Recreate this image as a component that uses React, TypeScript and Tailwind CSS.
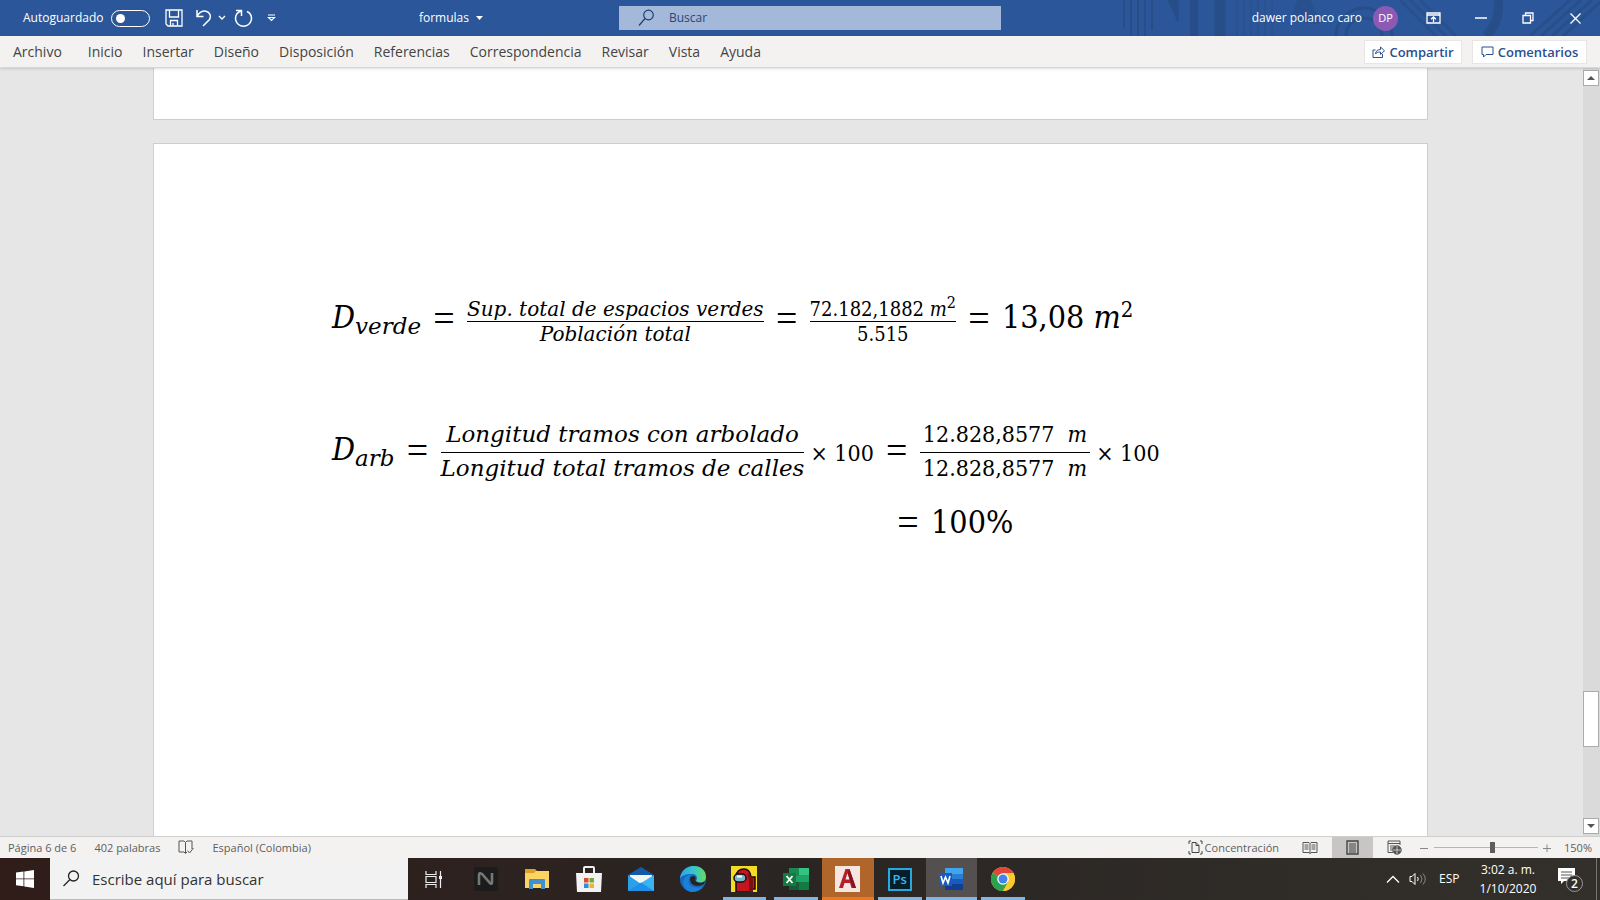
import React from "react";

const MENU = ["Inicio", "Insertar", "Diseño", "Disposición", "Referencias", "Correspondencia", "Revisar", "Vista", "Ayuda"];

function TitlePattern() {
  return (
    <svg className="pointer-events-none absolute right-0 top-0 h-9 w-[500px]" viewBox="0 0 500 36" fill="none" aria-hidden="true">
      <g stroke="#26497f" strokeWidth="3" opacity="0.6">
        <path d="M24 0v28M31 0v36M38 0v36M45 0v36M52 0v30" strokeWidth="2" />
        <path d="M68 0l10 22V0z" fill="#26497f" strokeWidth="1" />
        <path d="M94 0v36" strokeWidth="8" />
        <path d="M120 0v36" strokeWidth="11" />
        <path d="M137 0v36M144 0v36M151 0v36M158 0v36M165 0v36M172 0v36" strokeWidth="2" opacity="0.6" />
        <path d="M190 20L198 0h12l10 24z" fill="#26497f" strokeWidth="1" opacity="0.7" />
        <path d="M236 36a28 28 0 0 1 56 0M246 36a18 18 0 0 1 36 0" />
        <path d="M300 0l36 36M310 0l36 36M320 0l36 36" opacity="0.7" />
        <path d="M398 0a40 40 0 0 1-12 36" strokeWidth="9" />
        <path d="M430 36L470 0M441 36L481 0M452 36L492 0M463 36L500 2" />
      </g>
    </svg>
  );
}

function TitleBar() {
  return (
    <header className="relative h-9 bg-[#2b579a] text-white">
      <TitlePattern />
      <div className="relative grid h-full grid-cols-[619fr_382fr_599fr] items-center text-[12px] leading-5">
        <div className="flex items-center">
          <label className="flex items-center pl-[23px]">
            Autoguardado
            <input type="checkbox" className="peer sr-only" />
            <span className="ml-2 flex h-[17px] w-[39px] items-center rounded-full border border-white pl-1">
              <span className="size-[9px] rounded-full bg-white" />
            </span>
          </label>
          <button aria-label="Guardar" className="ml-[15px]">
            <svg width="18" height="18" viewBox="0 0 18 18" fill="none" stroke="white" strokeWidth="1.3"><path d="M1 1h16v16H3l-2-2zM4.5 1v7h9V1M5.500 17v-5.500h7V17M8 14v3" /></svg>
          </button>
          <button aria-label="Deshacer" className="ml-3">
            <svg width="17" height="18" viewBox="0 0 17 18" fill="none" stroke="white" strokeWidth="1.5"><path d="M2 1v6.500h6.500M2 7.500C4 3 8 1.500 11 2.300c4 1 5.500 5 3.500 8.200L8 17" /></svg>
          </button>
          <button aria-label="Opciones de deshacer" className="ml-[6px]">
            <svg width="8" height="6" viewBox="0 0 8 6" fill="none" stroke="white" strokeWidth="1.300"><path d="M1 1l3 3 3-3" /></svg>
          </button>
          <button aria-label="Repetir" className="ml-2">
            <svg width="19" height="19" viewBox="0 0 19 19" fill="none" stroke="white" strokeWidth="1.500"><path d="M2 1.500h5.500V7M7.300 2C3 3.500 1 7 1.700 11a8 8 0 0 0 15.600 0c.6-3.500-1-7-4.300-8.500" /></svg>
          </button>
          <button aria-label="Personalizar" className="ml-[14px]">
            <svg width="9" height="8" viewBox="0 0 9 8" fill="none" stroke="white" strokeWidth="1.200"><path d="M1 1h7M1.500 3.500h6l-3 3z" /></svg>
          </button>
          <button className="ml-auto mr-[136px] flex items-center gap-[7px]">
            formulas
            <svg width="7" height="4" viewBox="0 0 7 4" fill="white"><path d="M0 0h7L3.500 4z" /></svg>
          </button>
        </div>
        <label className="flex h-6 items-center bg-[#a4b8d9] pl-[19px] text-[#1f3f73]">
          <svg width="17" height="18" viewBox="0 0 17 18" fill="none" stroke="currentColor" strokeWidth="1.200" aria-hidden="true"><circle cx="10.500" cy="6" r="4.800" /><path d="M7 9.500L1 16.500" /></svg>
          <input type="text" aria-label="Buscar" placeholder="Buscar" className="ml-[14px] min-w-0 flex-1 bg-transparent outline-none placeholder:text-[#2a4678]" />
        </label>
        <div className="flex items-center justify-end">
          <span>dawer polanco caro</span>
          <span className="ml-[11px] flex size-[25px] items-center justify-center rounded-full bg-[#8c5ab5] text-[11px]">DP</span>
          <button aria-label="Opciones de la cinta" className="ml-[28px]">
            <svg width="15" height="12" viewBox="0 0 15 12" fill="none" stroke="white" strokeWidth="1.300"><path d="M1 1h13v10H1zM1 3h13M7.500 10V5M5 7.300L7.500 5 10 7.300" /></svg>
          </button>
          <button aria-label="Minimizar" className="ml-[34px]">
            <svg width="12" height="12" viewBox="0 0 12 12" stroke="white" strokeWidth="1.500"><path d="M0 6h12" /></svg>
          </button>
          <button aria-label="Restaurar" className="ml-[35px]">
            <svg width="12" height="12" viewBox="0 0 12 12" fill="none" stroke="white" strokeWidth="1.300"><path d="M1 3.500h7.500V11H1zM3.500 3.500V1H11v7.500H8.500" /></svg>
          </button>
          <button aria-label="Cerrar" className="ml-[36px] mr-[19px]">
            <svg width="11" height="11" viewBox="0 0 11 11" stroke="white" strokeWidth="1.300"><path d="M.5.5l10 10M10.500.5l-10 10" /></svg>
          </button>
        </div>
      </div>
    </header>
  );
}

function Ribbon() {
  return (
    <nav className="z-10 flex h-8 items-center border-b border-[#d8d8d8] bg-[#f3f2f1] text-[14px] leading-5 text-[#444444] shadow-sm">
      <div className="flex items-center gap-5 pl-[13px]">
        <button className="mr-[6px]">Archivo</button>
        {MENU.map((m) => (
          <button key={m}>{m}</button>
        ))}
      </div>
      <div className="ml-auto flex gap-[10px] pr-[13px] font-semibold text-[#2b4f8f]">
        <button className="flex h-6 w-[98px] items-center justify-center gap-1 border border-[#e8e6e4] bg-white text-[13px]">
          <svg width="13" height="13" viewBox="0 0 13 13" fill="none" stroke="currentColor"><path d="M3.500 5H1v7.500h9.500V9M3.500 9c.3-3 2-4.500 5-4.500V2l4 3.800-4 3.700V7C6 7 4.500 7.500 3.500 9z" /></svg>
          Compartir
        </button>
        <button className="flex h-6 w-[115px] items-center justify-center gap-1 border border-[#e8e6e4] bg-white text-[13px]">
          <svg width="13" height="12" viewBox="0 0 13 12" fill="none" stroke="currentColor"><path d="M1 1h11v7.500H5L2.500 11V8.500H1z" /></svg>
          Comentarios
        </button>
      </div>
    </nav>
  );
}

function Eq() {
  return <span className="flex w-[22px] justify-center pb-[6px] font-['Liberation_Serif',serif] text-[38px] leading-8">=</span>;
}

function Symbol({ sub }: { sub: string }) {
  return (
    <span className="flex items-baseline pb-[6px] leading-8 italic">
      <span className="text-[32px]">D</span>
      <span className="relative top-[6px] font-['DejaVu_Serif',serif] text-[23px]">{sub}</span>
    </span>
  );
}

function Fraction({ top, bottom, small }: { top: React.ReactNode; bottom: React.ReactNode; small?: boolean }) {
  return (
    <span className={small ? "flex flex-col text-center text-[20px] leading-6" : "flex flex-col pb-[6px] text-center text-[23px] leading-8"}>
      <span className={small ? "whitespace-pre border-b border-black" : "whitespace-pre border-b border-black px-[3px] pb-[2px]"}>{top}</span>
      <span className={small ? "whitespace-pre" : "whitespace-pre leading-[30px]"}>{bottom}</span>
    </span>
  );
}

function Words({ children }: { children: string }) {
  return <i className="font-['DejaVu_Serif',serif]">{children}</i>;
}

function Times() {
  return <span className="text-[23px] leading-8">× 100</span>;
}

function Document() {
  return (
    <main className="flex min-h-0 flex-1 bg-[#e6e6e6]">
      <div className="flex min-w-0 flex-1 flex-col pl-[153px] pr-[155px]">
        <div className="h-[52px] shrink-0 border-x border-b border-[#cecece] bg-white" />
        <article className="mt-[23px] flex-1 whitespace-nowrap border-x border-t border-[#cecece] bg-white pl-[178px] pt-[152px] font-['DejaVu_Serif_Condensed','DejaVu_Serif',serif] text-black">
          <div className="flex h-[50px] items-center gap-3">
            <Symbol sub="verde" />
            <Eq />
            <Fraction small top={<Words>Sup. total de espacios verdes</Words>} bottom={<Words>Población total</Words>} />
            <Eq />
            <Fraction small top={<>72.182,1882 <i>m</i><sup className="text-[16px] leading-none">2</sup></>} bottom="5.515" />
            <Eq />
            <span className="pb-2 text-[32px] leading-8">13,08 <i>m</i><sup className="text-[22px] leading-none">2</sup></span>
          </div>
          <div className="mt-[74px] flex h-[66px] items-center gap-3">
            <Symbol sub="arb" />
            <Eq />
            <span className="flex items-center gap-[6px]">
              <Fraction top={<Words>Longitud tramos con arbolado</Words>} bottom={<Words>Longitud total tramos de calles</Words>} />
              <Times />
            </span>
            <Eq />
            <span className="flex items-center gap-[6px]">
              <Fraction top={<>12.828,8577  <i>m</i></>} bottom={<>12.828,8577  <i>m</i></>} />
              <Times />
            </span>
          </div>
          <div className="mt-5 flex items-center gap-3 pl-[565px]">
            <Eq />
            <span className="pb-[6px] text-[32px] leading-8">100%</span>
          </div>
        </article>
      </div>
      <div className="flex w-[17px] flex-col bg-[#dadada] pr-px pt-[2px]">
        <button aria-label="Subir" className="flex h-4 items-center justify-center border border-[#ababab] bg-white">
          <svg width="8" height="4" viewBox="0 0 8 4" fill="#555"><path d="M0 4h8L4 0z" /></svg>
        </button>
        <div className="mt-auto h-14 border border-[#ababab] bg-white" />
        <button aria-label="Bajar" className="mb-[2px] mt-[71px] flex h-4 items-center justify-center border border-[#ababab] bg-white">
          <svg width="8" height="4" viewBox="0 0 8 4" fill="#555"><path d="M0 0h8L4 4z" /></svg>
        </button>
      </div>
    </main>
  );
}

function StatusBar() {
  return (
    <footer className="flex h-[22px] shrink-0 items-center border-t border-[#cfcfcf] bg-[#f3f2f1] text-[11px] leading-4 text-[#605e5c]">
      <span className="pl-2">Página 6 de 6</span>
      <span className="ml-[18px]">402 palabras</span>
      <button aria-label="Revisión" className="ml-[18px]">
        <svg width="16" height="15" viewBox="0 0 16 15" fill="none" stroke="#555"><path d="M7.500 2.500L6 1H1v11h5l1.500 1.500L9 12M7.500 2.500V13M7.500 2.500L9 1h5v8M9.500 10.500l2 2.500 4-5" /></svg>
      </button>
      <span className="ml-[18px]">Español (Colombia)</span>
      <button className="ml-auto flex items-center gap-[2px]">
        <svg width="15" height="15" viewBox="0 0 15 15" fill="none" stroke="#444"><path d="M3 1H1v3M12 1h2v3M3 14H1v-3M12 14h2v-3M4 2.500h4l3 3v7H4zM8 2.500v3h3" /></svg>
        Concentración
      </button>
      <button aria-label="Modo de lectura" className="ml-[23px]">
        <svg width="16" height="14" viewBox="0 0 16 14" fill="none" stroke="#555"><path d="M8 2.500L7 1.500H1v10h6l1 1 1-1h6v-10H9zV13M2.500 4h4M2.500 6h4M2.500 8h4M9.500 4h4M9.500 6h4M9.500 8h4" /></svg>
      </button>
      <button aria-label="Diseño de impresión" className="ml-[14px] flex h-[21px] w-[41px] items-center justify-center bg-[#c8c6c4]">
        <svg width="13" height="15" viewBox="0 0 13 15" fill="none" stroke="#444"><path d="M1 1h11v13H1z" strokeWidth="1.400" /><path d="M3 4h7M3 6h7M3 8h7M3 10h7M3 12h7" /></svg>
      </button>
      <button aria-label="Diseño web" className="ml-[14px]">
        <svg width="15" height="15" viewBox="0 0 15 15" fill="none" stroke="#555"><path d="M6 12.500H1V1h12v4M1 3.500h12M3 6h5M3 8h3M3 10h3" /><circle cx="10" cy="10" r="4.200" fill="#555" /><path d="M10 6v8M6 10h8" stroke="#eee" strokeWidth=".7" /></svg>
      </button>
      <button aria-label="Alejar" className="ml-[18px]">
        <svg width="8" height="8" viewBox="0 0 8 8" stroke="#888"><path d="M0 4.500h8" /></svg>
      </button>
      <label className="ml-[6px] flex h-4 w-[104px] items-center">
        <input type="range" aria-label="Zoom" min="10" max="260" defaultValue="152" className="h-px w-full appearance-none bg-[#b5b5b5] [&::-webkit-slider-thumb]:h-[11px] [&::-webkit-slider-thumb]:w-[5px] [&::-webkit-slider-thumb]:appearance-none [&::-webkit-slider-thumb]:bg-[#605e5c]" />
      </label>
      <button aria-label="Acercar" className="ml-[5px]">
        <svg width="8" height="8" viewBox="0 0 8 8" stroke="#888"><path d="M0 4.500h8M4 .5v8" /></svg>
      </button>
      <span className="ml-[13px] mr-2">150%</span>
    </footer>
  );
}

function TaskItem({ label, children, open, tone }: { label: string; children: React.ReactNode; open?: boolean; tone?: "orange" | "grey" }) {
  const bg = tone === "orange" ? "bg-[#b0652a]" : tone === "grey" ? "bg-[#53504f]" : "";
  const bar = tone === "orange" ? "bg-[#f07818]" : "bg-[#83b5e0]";
  return (
    <button aria-label={label} className={`relative flex h-full flex-1 items-center justify-center ${bg}`}>
      {children}
      {open && <span className={`absolute bottom-0 h-[3px] ${bar} ${tone ? "inset-x-0" : "inset-x-1"}`} />}
    </button>
  );
}

function Taskbar() {
  return (
    <div className="flex h-[42px] shrink-0 items-center bg-linear-to-r from-[#301d1a] via-[#2a2523] to-[#33302b] text-white">
      <button aria-label="Inicio" className="flex h-full w-[50px] items-center justify-center">
        <svg width="18" height="18" viewBox="0 0 18 18" fill="white"><path d="M0 2.500l7.500-1v7H0zM8.300 1.400L18 0v8.500H8.300zM0 9.300h7.500v7L0 15.300zM8.300 9.300H18V18l-9.700-1.400z" /></svg>
      </button>
      <label className="flex h-full w-[358px] items-center border-b border-[#bbb] bg-[#f2f2f2] pl-[13px] text-[#222]">
        <svg width="17" height="17" viewBox="0 0 17 17" fill="none" stroke="currentColor" strokeWidth="1.300" aria-hidden="true"><circle cx="10.500" cy="6" r="5" /><path d="M7 9.500L.5 16" /></svg>
        <input type="text" aria-label="Escribe aquí para buscar" placeholder="Escribe aquí para buscar" className="ml-[12px] min-w-0 flex-1 bg-transparent text-[15px] leading-6 outline-none placeholder:text-[#333]" />
      </label>
      <div className="flex h-full w-[621px]">
        <TaskItem label="Vista de tareas">
          <svg width="18" height="17" viewBox="0 0 18 17" fill="none" stroke="#eee" strokeWidth="1.200"><path d="M1 0v3.500h10V0M1 5.500h10v6H1zM1 17v-3.500h10V17M15.500 0v17" /><path d="M14 5h3v3h-3z" fill="#eee" stroke="none" /></svg>
        </TaskItem>
        <TaskItem label="Nox">
          <svg width="24" height="24" viewBox="0 0 24 24"><rect width="24" height="24" rx="2" fill="#1d1c1c" /><path d="M5 18V8q0-3 3-1l8 9q2 2 2-1V6" fill="none" stroke="#777" strokeWidth="2.600" /></svg>
        </TaskItem>
        <TaskItem label="Explorador de archivos">
          <svg width="24" height="22" viewBox="0 0 24 22"><path d="M0 1h10l2 2h12v17H0z" fill="#dfa02a" /><path d="M0 5h9l2-2h13v17H0z" fill="#fcd462" /><path d="M4 21v-9q0-1 1-1h14q1 0 1 1v9h-4v-5H8v5z" fill="#3f8fd2" /></svg>
        </TaskItem>
        <TaskItem label="Microsoft Store">
          <svg width="26" height="26" viewBox="0 0 26 26"><path d="M8 8V2q0-1 1-1h8q1 0 1 1v6" fill="none" stroke="#eee" strokeWidth="2" /><path d="M0 7h26l-1 19H1z" fill="#f2f2f2" /><path d="M8 12h4.500v4.500H8z" fill="#d8502b" /><path d="M13.500 12H18v4.500h-4.500z" fill="#78a83a" /><path d="M8 17.500h4.500V22H8z" fill="#2f8fd6" /><path d="M13.500 17.500H18V22h-4.500z" fill="#f0b428" /></svg>
        </TaskItem>
        <TaskItem label="Correo">
          <svg width="26" height="24" viewBox="0 0 26 24"><path d="M0 8l13-8 13 8v4H0z" fill="#135ba6" /><path d="M2 8h22v8H2z" fill="#f4f4f4" /><path d="M0 8l13 9L0 24z" fill="#2b9fe8" /><path d="M26 8v16H0z" fill="#39b3f3" /><path d="M0 24l13-8.500L26 24z" fill="#1e90e6" /></svg>
        </TaskItem>
        <TaskItem label="Edge">
          <svg width="26" height="26" viewBox="0 0 26 26"><defs><linearGradient id="edgeTop" x1="0" x2="1"><stop stopColor="#29a5e8" /><stop offset=".55" stopColor="#38c5c8" /><stop offset="1" stopColor="#66dc5a" /></linearGradient></defs><circle cx="13" cy="13" r="13" fill="#1768bd" /><path d="M0 13C1-4 26-4 26 11c0 6-7 7-10 4 2-3 1-7-4-7C5 8 1 10 0 13z" fill="url(#edgeTop)" /><path d="M9 13c-2 7 6 11 14 7-5 7-14 8-18 2C1 16 4 9 12 8c-2 1-3 3-3 5z" fill="#1b80d8" /><path d="M10 13c0 6 7 9 14 5l1-3c-3 3-9 2-10-1 1-1 1-3-1-4-2 0-4 1-4 3z" fill="#2a2120" /></svg>
        </TaskItem>
        <TaskItem label="Among Us" open>
          <svg width="26" height="26" viewBox="0 0 26 26"><path d="M0 0h26v26H0z" fill="#f3dc22" /><path d="M5 26V10Q6 3 13 3q6 0 7 8h4v12h-3v3z" fill="#c4171d" stroke="#160a0a" strokeWidth="1.500" /><path d="M16 7q3 8 2 19h4V12z" fill="#7c1015" /><rect x="3" y="8" width="12" height="8" rx="4" fill="#79b8cb" stroke="#160a0a" strokeWidth="1.500" /><path d="M6 10.500h5" stroke="white" strokeWidth="2" /></svg>
        </TaskItem>
        <TaskItem label="Excel" open>
          <svg width="26" height="22" viewBox="0 0 26 22"><path d="M6 0h20v22H6z" fill="#21a366" /><path d="M6 0h10v8H6z" fill="#188b50" /><path d="M16 0h10v7H16z" fill="#33c481" /><path d="M6 14h20v8H6z" fill="#185c37" /><path d="M16 14h10v8H16z" fill="#107c41" /><path d="M0 5h13v13H0z" fill="#107c41" /><path d="M3.500 8l6 7M9.500 8l-6 7" stroke="white" strokeWidth="1.800" /></svg>
        </TaskItem>
        <TaskItem label="AutoCAD" open tone="orange">
          <svg width="25" height="26" viewBox="0 0 25 26"><path d="M0 0h25v26H0z" fill="#f6e6e1" /><path d="M4 22L10.500 3h4L21 22h-4.500l-1.500-5H9.500L8 22zM10.500 13.500h4L12.500 7z" fill="#b3202b" /><path d="M14.500 3L21 22h-3L12.500 7z" fill="#86131d" /></svg>
        </TaskItem>
        <TaskItem label="Photoshop" open>
          <span className="flex h-[23px] w-6 items-center justify-center border-2 border-[#27a9dd] bg-[#061d2a] text-[13px] font-semibold leading-4 text-[#35b8ec]">Ps</span>
        </TaskItem>
        <TaskItem label="Word" open tone="grey">
          <svg width="24" height="22" viewBox="0 0 24 22"><path d="M6 0h18v22H6z" fill="#2b7cd3" /><path d="M6 0h18v6H6z" fill="#41a5ee" /><path d="M6 11h18v6H6z" fill="#185abd" /><path d="M6 16h18v6H6z" fill="#103f91" /><path d="M0 5h13v13H0z" fill="#185abd" /><path d="M2 8l2 7 2.500-6L9 15l2-7" fill="none" stroke="white" strokeWidth="1.600" /></svg>
        </TaskItem>
        <TaskItem label="Chrome" open>
          <svg width="24" height="24" viewBox="0 0 24 24"><circle cx="12" cy="12" r="12" fill="#f9c930" /><path d="M12 12L1.600 6A12 12 0 0 1 22.400 6z" fill="#e0463a" /><path d="M1.600 6A12 12 0 0 0 12 24l5-9-5-3z" fill="#2da14f" /><path d="M12 6h10.400A12 12 0 0 1 12 24l5.200-9z" fill="#f9c930" /><circle cx="12" cy="12" r="5.800" fill="white" /><circle cx="12" cy="12" r="4.500" fill="#4285e8" /></svg>
        </TaskItem>
      </div>
      <div className="ml-auto flex h-full items-center">
        <button aria-label="Mostrar iconos ocultos">
          <svg width="14" height="8" viewBox="0 0 14 8" fill="none" stroke="white" strokeWidth="1.300"><path d="M1 7.500l6-6 6 6" /></svg>
        </button>
        <button aria-label="Volumen" className="ml-[9px]">
          <svg width="18" height="14" viewBox="0 0 18 14" fill="none" stroke="white"><path d="M1 4.500h2l3-3v11l-3-3H1zM8.500 5q1.500 2 0 4" /><path d="M11.500 3q3 4 0 8M14 1.500q4.500 5.500 0 11" stroke="#888" /></svg>
        </button>
        <span className="ml-3 w-5 text-[12px] leading-4">ESP</span>
        <div className="ml-[18px] w-[62px] whitespace-nowrap text-center text-[12px] leading-[19px]">
          <div>3:02 a. m.</div>
          <div>1/10/2020</div>
        </div>
        <button aria-label="Notificaciones" className="ml-[18px]">
          <svg width="27" height="26" viewBox="0 0 27 26"><path d="M1 2h17v13H7l-3 3v-3H1z" fill="white" /><path d="M4 6h11M4 9h11M4 12h8" stroke="#555" /><circle cx="17.500" cy="17.500" r="8" fill="#33302b" stroke="#999" /><text x="17.500" y="22" fill="white" fontSize="12" fontWeight="600" textAnchor="middle" fontFamily="Open Sans, sans-serif">2</text></svg>
        </button>
        <span className="ml-3 mr-[3px] h-full w-px bg-[#77736d]" />
      </div>
    </div>
  );
}

export default function App() {
  return (
    <div className="flex h-screen flex-col overflow-hidden font-['Open_Sans','Noto_Sans',sans-serif]">
      <TitleBar />
      <Ribbon />
      <Document />
      <StatusBar />
      <Taskbar />
    </div>
  );
}
